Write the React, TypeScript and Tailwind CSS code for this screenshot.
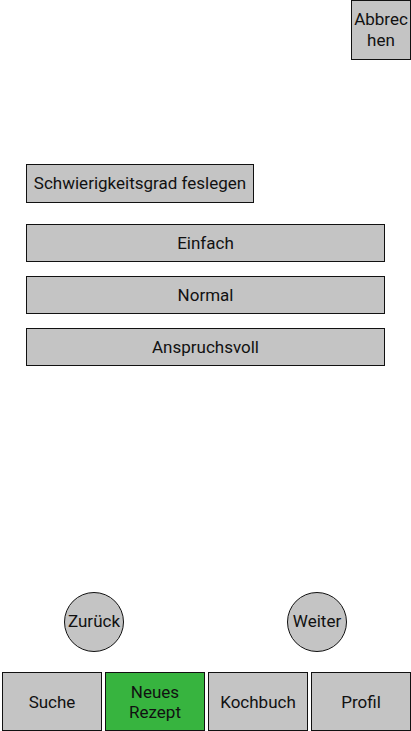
import React from "react";

const font = { fontFamily: "Roboto, 'Noto Sans', sans-serif" };

function NavBtn({ label, active }: { label: React.ReactNode; active?: boolean }) {
  return (
    <button
      className={
        "w-[100px] h-[59px] border border-[#111] flex items-center justify-center text-center text-[17px] leading-[20px] text-[#111] " +
        (active ? "bg-[#37b43f]" : "bg-[#c4c4c4]")
      }
    >
      {label}
    </button>
  );
}

function Row({ label }: { label: string }) {
  return (
    <button className="w-[359px] h-[38px] border border-[#111] bg-[#c4c4c4] flex items-center justify-center text-[17px] pt-[1px] text-[#111]">
      {label}
    </button>
  );
}

export default function App() {
  return (
    <div style={font} className="w-[411px] h-[731px] bg-white flex flex-col overflow-hidden">
      <div className="flex justify-end">
        <button className="w-[60px] h-[60px] border border-[#111] bg-[#c4c4c4] flex items-center justify-center text-center text-[17px] leading-[21px] text-[#111] px-0">
          Abbrec
          <br />
          hen
        </button>
      </div>
      <div className="pl-[26px] pt-[104px] flex flex-col">
        <div className="w-[228px] h-[39px] border border-[#111] bg-[#c4c4c4] flex items-center justify-center text-[17px] text-[#111] whitespace-nowrap">
          Schwierigkeitsgrad feslegen
        </div>
        <div className="mt-[21px] flex flex-col gap-[14px]">
          <Row label="Einfach" />
          <Row label="Normal" />
          <Row label="Anspruchsvoll" />
        </div>
      </div>
      <div className="mt-auto flex justify-between px-[64px]">
        <button className="w-[60px] h-[60px] rounded-full border border-[#111] bg-[#c4c4c4] flex items-center justify-center text-[17px] text-[#111] whitespace-nowrap">
          Zurück
        </button>
        <button className="w-[60px] h-[60px] rounded-full border border-[#111] bg-[#c4c4c4] flex items-center justify-center text-[17px] text-[#111] whitespace-nowrap">
          Weiter
        </button>
      </div>
      <div className="mt-[20px] flex gap-[3px] pl-[2px]">
        <NavBtn label="Suche" />
        <NavBtn
          active
          label={
            <>
              Neues
              <br />
              Rezept
            </>
          }
        />
        <NavBtn label="Kochbuch" />
        <NavBtn label="Profil" />
      </div>
    </div>
  );
}
